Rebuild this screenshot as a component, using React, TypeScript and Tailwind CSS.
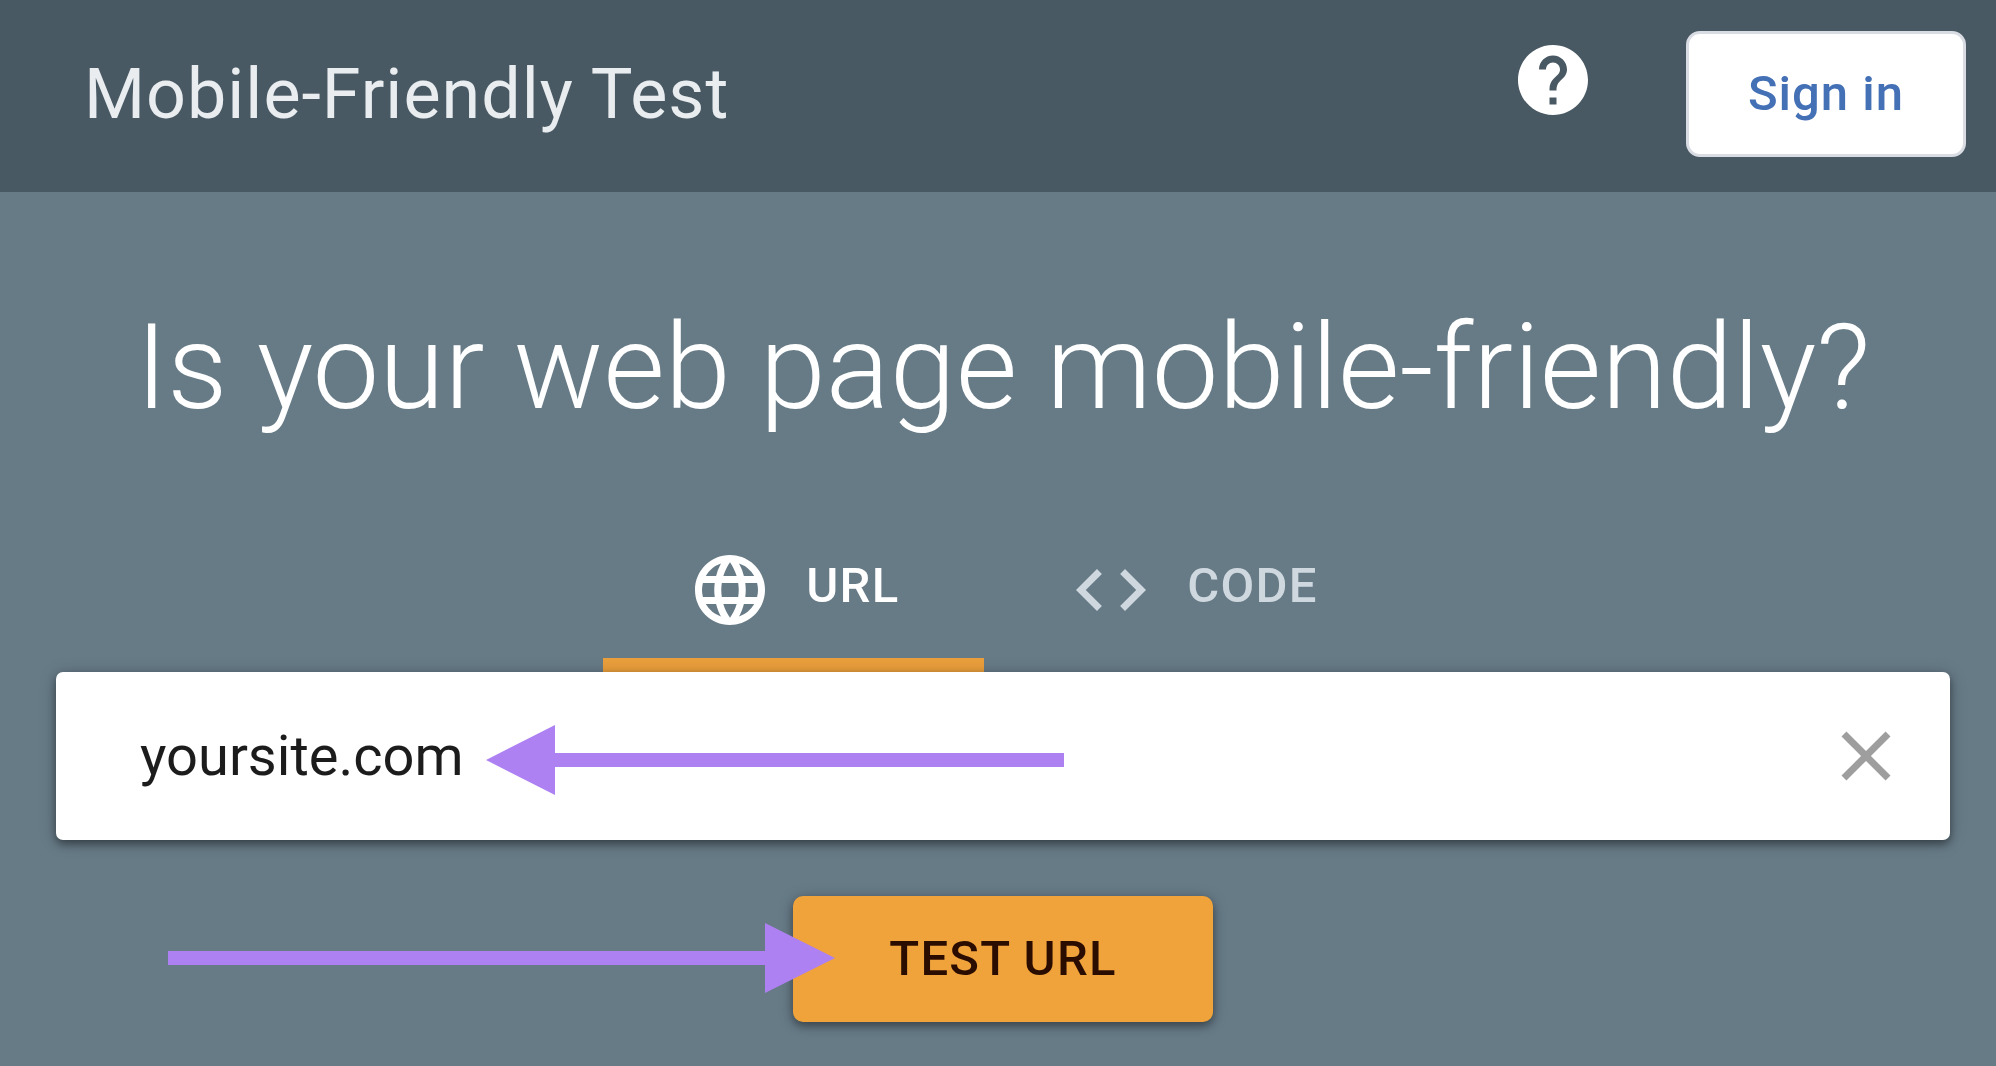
import { useState } from "react";
import { MdClose, MdCode, MdHelp, MdLanguage } from "react-icons/md";

const Appbar = () => (
  <header className="flex h-48 items-center bg-[#495963] pr-[30px] pb-1 pl-21">
    <h1 className="grow text-[70px] leading-[84px] tracking-[1px] text-[#e9edf0]">
      Mobile-Friendly Test
    </h1>
    <button type="button" aria-label="Help" className="mb-7 text-white">
      <MdHelp size={84} />
    </button>
    <button
      type="button"
      className="ml-[91px] h-[126px] w-[280px] rounded-[14px] border-3 border-[#dadce4] bg-white text-[49px] font-medium tracking-[1px] text-[#4470b5]"
    >
      Sign in
    </button>
  </header>
);

const tabs = [
  { id: "url", label: "URL", Icon: MdLanguage },
  { id: "code", label: "CODE", Icon: MdCode },
];

const Tabs = ({
  active,
  onChange,
}: {
  active: string;
  onChange: (id: string) => void;
}) => (
  <div role="tablist" className="flex justify-center">
    {tabs.map(({ id, label, Icon }) => (
      <button
        key={id}
        type="button"
        role="tab"
        aria-selected={active === id}
        onClick={() => onChange(id)}
        className={
          active === id
            ? "flex h-[162px] items-center gap-[34px] border-b-14 border-[#eb9f3c] px-[85px] pt-3 text-white"
            : "flex h-[162px] items-center gap-[34px] border-b-14 border-transparent px-[85px] pt-3 text-[#cfd8df]"
        }
      >
        <Icon size={84} />
        <span className="pb-2 text-[49px] leading-[56px] font-medium tracking-wide">
          {label}
        </span>
      </button>
    ))}
  </div>
);

const LeftArrow = () => (
  <svg
    viewBox="0 0 578 70"
    className="pointer-events-none absolute top-[53px] left-[430px] h-[70px] w-[578px]"
    fill="#ae81f3"
    aria-hidden="true"
  >
    <path d="M0 35 69 0v28h509v14H69v28z" />
  </svg>
);

const RightArrow = () => (
  <svg
    viewBox="0 0 667 70"
    className="pointer-events-none absolute top-[27px] right-[378px] h-[70px] w-[667px]"
    fill="#ae81f3"
    aria-hidden="true"
  >
    <path d="M667 35 597 0v28H0v14h597v28z" />
  </svg>
);

const App = () => {
  const [tab, setTab] = useState("url");
  const [url, setUrl] = useState("yoursite.com");

  return (
    <div className="min-h-screen bg-[#677b87] font-['Roboto',sans-serif]">
      <Appbar />
      <main className="pt-[106px] pr-[46px] pb-10 pl-14">
        <h2 className="text-center text-[119px] leading-[140px] font-light text-white">
          Is your web page mobile-friendly?
        </h2>
        <form className="pt-[72px]" onSubmit={(e) => e.preventDefault()}>
          <Tabs active={tab} onChange={setTab} />
          <div className="relative flex h-[168px] items-center rounded-[7px] bg-white pr-[42px] pl-[84px] shadow-[0_4px_8px_rgba(0,0,0,0.4),0_2px_18px_rgba(0,0,0,0.2)]">
            <input
              type="text"
              aria-label="Enter a URL to test"
              value={url}
              onChange={(e) => setUrl(e.target.value)}
              className="min-w-0 grow bg-transparent text-[56px] leading-[84px] text-[#1c1c1c] outline-none"
            />
            <button
              type="button"
              aria-label="Clear"
              onClick={() => setUrl("")}
              className="text-[#9e9e9e]"
            >
              <MdClose size={84} />
            </button>
            <LeftArrow />
          </div>
          <div className="flex justify-center pt-14">
            <div className="relative flex">
              <button
                type="submit"
                className="h-[126px] w-[420px] rounded-[10px] bg-[#f1a33b] text-[49px] font-medium tracking-wide text-[#2b0d00] shadow-[0_4px_8px_rgba(0,0,0,0.35),0_2px_16px_rgba(0,0,0,0.2)]"
              >
                TEST URL
              </button>
              <RightArrow />
            </div>
          </div>
        </form>
      </main>
    </div>
  );
};

export default App;
